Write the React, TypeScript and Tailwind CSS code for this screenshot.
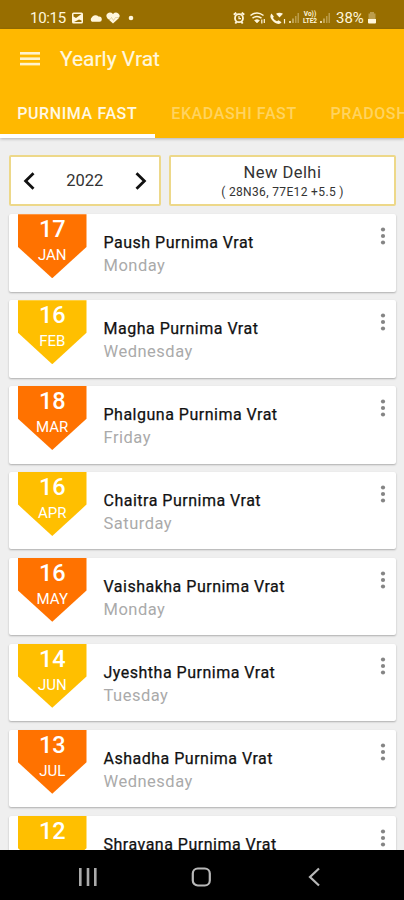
import React from "react";
import clsx from "clsx";

interface Fast {
  day: string;
  month: string;
  name: string;
  weekday: string;
}

const fasts: Fast[] = [
  { day: "17", month: "JAN", name: "Paush Purnima Vrat", weekday: "Monday" },
  { day: "16", month: "FEB", name: "Magha Purnima Vrat", weekday: "Wednesday" },
  { day: "18", month: "MAR", name: "Phalguna Purnima Vrat", weekday: "Friday" },
  { day: "16", month: "APR", name: "Chaitra Purnima Vrat", weekday: "Saturday" },
  { day: "16", month: "MAY", name: "Vaishakha Purnima Vrat", weekday: "Monday" },
  { day: "14", month: "JUN", name: "Jyeshtha Purnima Vrat", weekday: "Tuesday" },
  { day: "13", month: "JUL", name: "Ashadha Purnima Vrat", weekday: "Wednesday" },
  { day: "12", month: "", name: "Shravana Purnima Vrat", weekday: "" },
];

function SignalIcon() {
  return (
    <svg width="13" height="12" viewBox="0 0 13 12" fill="#fff3d0">
      <rect x="1" y="9" width="2" height="2" opacity="0.8" />
      <rect x="4" y="6.500" width="2" height="4.500" opacity="0.4" />
      <rect x="7" y="4" width="1.500" height="7" opacity="0.35" />
      <rect x="9.500" y="1" width="1.500" height="10" opacity="0.35" />
    </svg>
  );
}

function StatusBar() {
  return (
    <div className="flex h-[28.5px] shrink-0 items-start bg-[#986e00] pt-[9px] text-[#fff6dc]">
      <span className="ml-[30px] w-[41px] text-[15px] leading-[19px] tracking-[-0.3px]">10:15</span>
      <svg className="mt-[3px]" width="76" height="13" viewBox="0 0 76 13" fill="currentColor">
        <path
          fillRule="evenodd"
          d="M2.500 0.500H10.500Q12 0.500 12 2V10Q12 11.500 10.500 11.500H2.500Q1 11.500 1 10V2Q1 0.500 2.500 0.500ZM2.500 2V4.500L5 6L10.500 2ZM3 10H10.500V8.500L8 7.500Z"
        />
        <path d="M21 9.700A2.600 2.600 0 0 1 20.700 5.500 A4.200 4.200 0 0 1 27.500 4.500 A3 3 0 0 1 30.800 7.500 Q30.800 9.700 28.500 9.700Z" />
        <path d="M42 11.500L36.500 6.500Q34.200 3.500 36.500 1.400Q39.500 -0.500 42 2Q44.500 -0.500 47.300 1.400Q50 3.500 47.500 6.500Z" />
        <path d="M36 7.500H39L40.500 5.500L42.500 8.500L44.500 5.500H48" fill="none" stroke="#986e00" strokeWidth="0.600" opacity="0.4" />
        <circle cx="60" cy="6" r="2.300" />
      </svg>
      <div className="ml-auto flex items-start pr-[27px]">
        <svg className="mt-[3px] mr-[1px]" width="54" height="13" viewBox="0 0 54 13" fill="none" stroke="currentColor" strokeWidth="1.500">
          {/* alarm */}
          <circle cx="6" cy="6.200" r="4" strokeWidth="1.800" />
          <path d="M0.800 2.800L3.300 0.700M8.700 0.700L11.200 2.800M2.300 11.500L3.500 10M9.700 11.500L8.500 10" strokeWidth="2" />
          <path d="M6 4V6.700H8" strokeWidth="1.200" />
          {/* wifi */}
          <path d="M17.500 3.500Q24 -1.500 30.500 3.500M19.500 6.200Q24 2.600 28.500 6.200" />
          <path d="M21.500 8.500Q24 6.400 26.500 8.500L24 11Z" fill="currentColor" strokeWidth="0.500" />
          <path d="M28.800 11.500V7.500M31.300 7V11" strokeWidth="1.200" />
          {/* wifi calling */}
          <path d="M38.500 1.500L40.800 4.500L40 6Q41.500 8.500 44 9.200L45.500 8.200L48.500 10.300Q47.500 12 45.500 12Q41.500 11.500 39 8Q36 4.500 38.500 1.500Z" fill="currentColor" stroke="none" />
          <path d="M43 1.700Q46.500 -0.200 50 1.700L46.500 5.500Z" fill="currentColor" stroke="none" />
          <path d="M51.500 7V11.500" strokeWidth="1.200" />
        </svg>
        <div className="mt-[3px]"><SignalIcon /></div>
        <div className="mt-[2px] w-[18px] text-center text-[6.500px] leading-[7px] font-bold whitespace-nowrap">
          <div>Vo))</div>
          <div>LTE2</div>
        </div>
        <div className="mt-[3px]"><SignalIcon /></div>
        <span className="ml-[4px] w-[31px] text-[15px] leading-[19px]">38%</span>
        <svg className="mt-[3px]" width="10" height="12" viewBox="0 0 10 12" fill="currentColor">
          <path d="M3 0H7V1.500H8.500V7H1.500V1.500H3Z" opacity="0.35" />
          <path d="M1 7H9V10.500Q9 11.500 8 11.500H2Q1 11.500 1 10.500Z" />
        </svg>
      </div>
    </div>
  );
}

function AppHeader() {
  return (
    <header className="z-10 flex h-[109.5px] shrink-0 flex-col overflow-hidden bg-[#ffb800] shadow-[0_1px_3px_rgba(0,0,0,0.25)]">
      <div className="flex h-[61px] items-center pl-5">
        <svg width="20" height="16" viewBox="0 0 20 16" fill="#fff3cf">
          <rect y="1" width="20" height="2.600" />
          <rect y="6.400" width="20" height="2.600" />
          <rect y="11.800" width="20" height="2.600" />
        </svg>
        <h1 className="ml-5 text-[21px] leading-6 text-[#fff7df] [-webkit-text-stroke:0.2px]">Yearly Vrat</h1>
      </div>
      <nav className="flex h-[48.5px] text-[16px] font-medium tracking-[0.600px] whitespace-nowrap">
        <div className="flex w-[154.500px] shrink-0 items-center justify-center border-b-[4px] border-white pt-[4px] text-[#fff8e5]">
          PURNIMA FAST
        </div>
        <div className="flex w-[159px] shrink-0 items-center justify-center text-[#ffd35f]">
          EKADASHI FAST
        </div>
        <div className="flex shrink-0 items-center pl-[17px] text-[#ffd35f]">PRADOSH FAST</div>
      </nav>
    </header>
  );
}

function Chevron({ flip }: { flip?: boolean }) {
  return (
    <svg
      className={clsx(flip && "rotate-180")}
      width="12"
      height="18"
      viewBox="0 0 12 18"
      fill="none"
      stroke="#111"
      strokeWidth="2.800"
    >
      <path d="M10.500 1.200L2.600 9L10.500 16.800" />
    </svg>
  );
}

function Selectors() {
  return (
    <div className="flex h-[51px] shrink-0 gap-[8.5px]">
      <div className="flex w-[151.500px] items-center justify-between rounded-[2px] border-2 border-[#edd889] bg-white px-[12px]">
        <Chevron />
        <span className="pt-[2px] text-[16.500px] text-[#333]">2022</span>
        <Chevron flip />
      </div>
      <div className="flex flex-1 flex-col items-center rounded-[2px] border-2 border-[#edd889] bg-white pt-[6px] text-[#333]">
        <span className="text-[16.500px] leading-[20px] tracking-[0.450px]">New Delhi</span>
        <span className="text-[12px] leading-[19px] tracking-[0.350px]">( 28N36, 77E12 +5.5 )</span>
      </div>
    </div>
  );
}

function FastCard({ fast, odd }: { fast: Fast; odd: boolean }) {
  return (
    <article className="flex h-[77.500px] shrink-0 rounded-[2px] bg-white pl-[9px] shadow-[0_1px_2px_rgba(0,0,0,0.28)]">
      <div
        className={clsx(
          "flex h-[64px] w-[68.500px] flex-col items-center text-white [clip-path:polygon(0_0,100%_0,100%_51%,50%_100%,0_51%)]",
          odd ? "bg-[#ff7200]" : "bg-[#ffbf00]"
        )}
      >
        <span className="mt-[2px] text-[23.500px] leading-[27px] font-medium">{fast.day}</span>
        <span className="text-[15px] leading-[24px]">{fast.month}</span>
      </div>
      <div className="ml-[17px] flex flex-1 flex-col pt-[17px] whitespace-nowrap">
        <h3 className="text-[16px] leading-[23px] tracking-[0.500px] text-[#111] [-webkit-text-stroke:0.25px]">
          {fast.name}
        </h3>
        <span className="text-[16.500px] leading-[23px] tracking-[0.500px] text-[#aaa]">{fast.weekday}</span>
      </div>
      <svg className="mt-[12px] mr-[10px]" width="6" height="20" viewBox="0 0 6 20" fill="#858585">
        <circle cx="3" cy="3.500" r="2.100" />
        <circle cx="3" cy="10" r="2.100" />
        <circle cx="3" cy="16.500" r="2.100" />
      </svg>
    </article>
  );
}

function NavigationBar() {
  return (
    <footer className="z-10 flex h-[50px] shrink-0 items-center bg-black pt-[3px] pl-[79px]">
      <svg width="19" height="20" viewBox="0 0 19 20" fill="#aaa">
        <rect y="1" width="2.600" height="18" />
        <rect x="7.700" y="1" width="2.600" height="18" />
        <rect x="15" y="1" width="2.600" height="18" />
      </svg>
      <svg className="ml-[93px]" width="21" height="20" viewBox="0 0 21 20" fill="none" stroke="#b8b8b8" strokeWidth="2.200">
        <rect x="1.800" y="1.500" width="17" height="17" rx="5" />
      </svg>
      <svg className="ml-[96px]" width="13" height="20" viewBox="0 0 13 20" fill="none" stroke="#b8b8b8" strokeWidth="2.200">
        <path d="M11 1.500L2 10L11 18.500" />
      </svg>
    </footer>
  );
}

export default function App() {
  return (
    <div className="flex h-[900px] w-[404px] flex-col overflow-hidden bg-[#efefef] font-['Roboto',sans-serif]">
      <StatusBar />
      <AppHeader />
      <main className="flex min-h-0 flex-1 flex-col overflow-hidden pt-[17px] pr-2 pl-[9px]">
        <Selectors />
        <section className="mt-[8.3px] flex flex-col gap-[8.400px]">
          {fasts.map((fast, index) => (
            <FastCard key={fast.name} fast={fast} odd={index % 2 === 0} />
          ))}
        </section>
      </main>
      <NavigationBar />
    </div>
  );
}
